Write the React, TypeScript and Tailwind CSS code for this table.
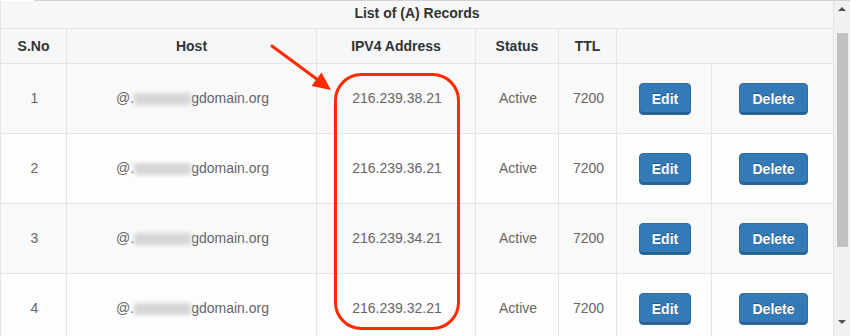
import React from 'react';

const records = [
  { no: 1, ip: '216.239.38.21' },
  { no: 2, ip: '216.239.36.21' },
  { no: 3, ip: '216.239.34.21' },
  { no: 4, ip: '216.239.32.21' },
];

function Host() {
  return (
    <span className="inline-flex items-center">
      <span>@.</span>
      <span className="inline-block w-[57px] h-[12px] bg-[#d6d6d6] blur-[2px]" />
      <span>gdomain.org</span>
    </span>
  );
}

function Btn({ label }: { label: string }) {
  return (
    <button className="h-[32px] px-[12px] rounded-[4px] border border-[#2e6da4] bg-[#337ab7] text-white font-bold text-[14px] leading-none shadow-[inset_0_-2px_0_#28608f] [text-shadow:0_-1px_0_rgba(0,0,0,0.3)]">
      {label}
    </button>
  );
}

export default function App() {
  return (
    <div className="relative w-[859px] h-[336px] overflow-hidden bg-white font-['Liberation_Sans',Arial,sans-serif] text-[14px]">
      <div className="flex h-px">
        <div className="w-[34px] bg-white" />
        <div className="w-[816px] bg-[#d2d2d2]" />
      </div>
      <div className="flex">
        <div className="w-[834px] border-l border-[#e4e4e4]">
          <div className="h-[28px] bg-[#f6f7f9] border-b border-r border-[#e4e4e4] flex justify-center pt-[2px] font-bold text-[#333]">
            List of (A) Records
          </div>
          <div className="flex h-[35px] bg-[#f6f7f9] border-b border-[#e4e4e4] font-bold text-[#333]">
            <div className="w-[66px] border-r border-[#e4e4e4] flex items-center justify-center">S.No</div>
            <div className="w-[250px] border-r border-[#e4e4e4] flex items-center justify-center">Host</div>
            <div className="w-[159px] border-r border-[#e4e4e4] flex items-center justify-center">IPV4 Address</div>
            <div className="w-[83px] border-r border-[#e4e4e4] flex items-center justify-center">Status</div>
            <div className="w-[58px] border-r border-[#e4e4e4] flex items-center justify-center">TTL</div>
            <div className="w-[217px] border-r border-[#e4e4e4]" />
          </div>
          {records.map((r, i) => (
            <div
              key={r.no}
              className={`flex h-[70px] border-b border-[#e4e4e4] text-[#666] ${i % 2 === 0 ? 'bg-[#f9f9f9]' : 'bg-[#fdfdfd]'}`}
            >
              <div className="w-[66px] border-r border-[#e4e4e4] flex items-center justify-center pl-[2px]">{r.no}</div>
              <div className="w-[250px] border-r border-[#e4e4e4] flex items-center justify-center pl-[2px]">
                <Host />
              </div>
              <div className="w-[159px] border-r border-[#e4e4e4] flex items-center justify-center pl-[2px]">{r.ip}</div>
              <div className="w-[83px] border-r border-[#e4e4e4] flex items-center justify-center pl-[2px]">Active</div>
              <div className="w-[58px] border-r border-[#e4e4e4] flex items-center justify-center pl-[2px]">7200</div>
              <div className="w-[95px] border-r border-[#e4e4e4] flex items-center justify-center pl-[2px]">
                <Btn label="Edit" />
              </div>
              <div className="w-[122px] border-r border-[#e4e4e4] flex items-center justify-center pl-[2px]">
                <Btn label="Delete" />
              </div>
            </div>
          ))}
        </div>
        <div className="w-[16px] h-[335px] bg-[#f1f1f1] flex flex-col items-center">
          <div className="h-[32px] flex items-center justify-center">
            <div className="w-0 h-0 border-l-[4px] border-r-[4px] border-b-[4px] border-l-transparent border-r-transparent border-b-[#505050] -mt-[16px]" />
          </div>
          <div className="w-[11px] h-[214px] bg-[#c1c1c1]" />
          <div className="flex-1 flex items-end pb-[12px]">
            <div className="w-0 h-0 border-l-[4px] border-r-[4px] border-t-[4px] border-l-transparent border-r-transparent border-t-[#505050]" />
          </div>
        </div>
      </div>
      <svg className="absolute inset-0 pointer-events-none" width="859" height="336" viewBox="0 0 859 336">
        <rect x="335.5" y="74.5" width="123" height="254" rx="26" fill="none" stroke="#ff2a00" strokeWidth="3" />
        <line x1="272" y1="46" x2="318" y2="80" stroke="#ff2a00" strokeWidth="3" strokeLinecap="round" />
        <polygon points="331,90 311.5,86 321.5,72.5" fill="#ff2a00" />
      </svg>
    </div>
  );
}
